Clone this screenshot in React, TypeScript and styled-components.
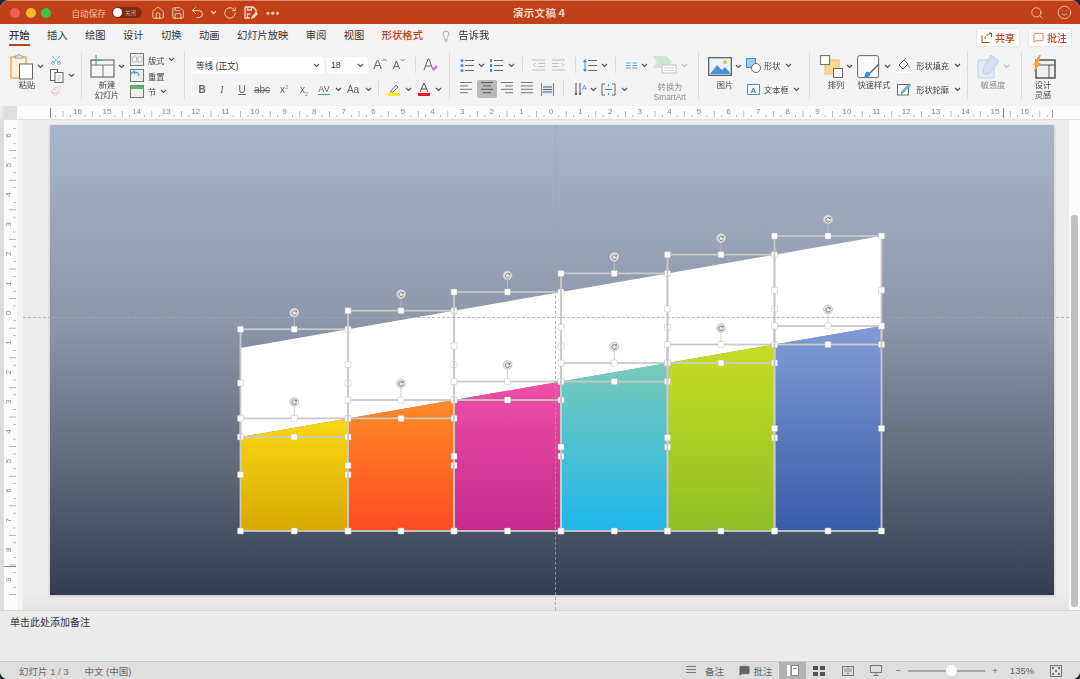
import React from 'react';
import styled, { createGlobalStyle } from 'styled-components';
import { House, Save, Undo2, RotateCw, Search, Smile, Lightbulb, MessageSquare, Scissors, Paintbrush, MessageSquareText } from 'lucide-react';

const RED = '#c0401a';
const CJK = '"Liberation Sans", "Noto Sans CJK SC", sans-serif';

const Global = createGlobalStyle`
    html, body { margin: 0; padding: 0; background: #202a38; }
    body { font-family: ${CJK}; }
    sup, sub { font-size: 5.5px; line-height: 0; color: #4a93d8; }
`;

const Window = styled.div`
    width: 1080px;
    height: 679px;
    display: flex;
    flex-direction: column;
    overflow: hidden;
    border-radius: 9px 9px 8px 8px;
    background: #ebebeb;
    filter: blur(0.3px);
`;

/* title bar */
const TitleBar = styled.div`
    height: 24px;
    flex: none;
    box-sizing: border-box;
    display: grid;
    grid-template-columns: 1fr auto 1fr;
    align-items: center;
    background: ${RED};
    border-top: 1px solid #dd8a6c;
    color: #f7d9cc;
`;

const TitleLeft = styled.div`
    display: flex;
    align-items: center;
    padding-left: 10px;
`;

const TitleRight = styled.div`
    display: flex;
    align-items: center;
    justify-content: flex-end;
    padding-right: 6px;
`;

const Light = styled.span<{ $c: string }>`
    width: 10px;
    height: 10px;
    margin-right: 5.5px;
    border-radius: 50%;
    background: ${(p) => p.$c};
`;

const AutoSave = styled.span`
    margin-left: 15px;
    font-size: 8.6px;
    color: #f0c0ac;
`;

const Toggle = styled.div`
    width: 30px;
    height: 11px;
    margin: 0 6px;
    display: flex;
    align-items: center;
    border-radius: 6px;
    background: #7d2c12;
    font-size: 5.5px;
    color: #d9a997;
`;

const Knob = styled.span`
    width: 9px;
    height: 9px;
    margin: 0 3px 0 1px;
    border-radius: 50%;
    background: #fff;
`;

const MoreDots = styled.span`
    font-size: 7px;
    letter-spacing: 0.6px;
    color: #f7d9cc;
`;

const DocName = styled.div`
    font-size: 10.5px;
    font-weight: 700;
    letter-spacing: 0.3px;
    color: #f6d5c7;
`;

const Cell = styled.div<{ $w: number; $on?: boolean }>`
    width: ${(p) => p.$w}px;
    height: 18px;
    flex: none;
    display: flex;
    align-items: center;
    justify-content: center;
    border-radius: 2px;
    font-size: 10px;
    color: #666;
    background: ${(p) => (p.$on ? '#b9b9b9' : 'transparent')};
`;

/* tabs */
const TabRow = styled.div`
    height: 26px;
    flex: none;
    display: flex;
    align-items: flex-start;
    gap: 17.4px;
    padding: 0 8px 0 9px;
    background: #f3f3f3;
`;

const Tab = styled.div<{ $active?: boolean; $accent?: boolean }>`
    height: 22px;
    box-sizing: border-box;
    padding-top: 4px;
    display: flex;
    align-items: center;
    gap: 6px;
    font-size: 10.3px;
    line-height: 16px;
    color: ${(p) => (p.$accent ? RED : '#333')};
    font-weight: ${(p) => (p.$active || p.$accent ? 500 : 400)};
    border-bottom: 2px solid ${(p) => (p.$active ? RED : 'transparent')};
`;

const TabButtons = styled.div`
    margin-left: auto;
    padding-top: 4px;
    display: flex;
    gap: 8px;
`;

const TabButton = styled.div`
    width: 44px;
    height: 19px;
    display: flex;
    align-items: center;
    justify-content: center;
    gap: 3px;
    background: #fff;
    border: 1px solid #e6e6e6;
    box-sizing: border-box;
    border-radius: 2px;
    font-size: 10px;
    font-weight: 500;
    color: ${RED};
`;

/* ribbon */
const Ribbon = styled.div`
    height: 56px;
    flex: none;
    box-sizing: border-box;
    padding-top: 2px;
    display: flex;
    align-items: flex-start;
    background: #f3f3f3;
`;

const Group = styled.div<{ $w: number; $pad?: number; $last?: boolean }>`
    width: ${(p) => p.$w}px;
    height: 47px;
    flex: none;
    box-sizing: border-box;
    padding-left: ${(p) => p.$pad ?? 0}px;
    display: flex;
    border-right: ${(p) => (p.$last ? 'none' : '1px solid #dcdcdc')};
`;

const BigTool = styled.div<{ $w: number }>`
    width: ${(p) => p.$w}px;
    flex: none;
    display: flex;
    flex-direction: column;
    align-items: center;
`;

const BigIcon = styled.div`
    height: 29px;
    flex: none;
    display: flex;
    align-items: center;
    justify-content: center;
    gap: 3px;
`;

const ToolLabel = styled.div<{ $off?: boolean }>`
    flex: none;
    font-size: 8.2px;
    line-height: 9.8px;
    text-align: center;
    white-space: nowrap;
    color: ${(p) => (p.$off ? '#8f8f8f' : '#444')};
`;

const ThreeStack = styled.div<{ $ml: number }>`
    margin-left: ${(p) => p.$ml}px;
    display: flex;
    flex-direction: column;
`;

const StackRow = styled.div`
    height: 17px;
    display: flex;
    align-items: center;
    gap: 4px;
    font-size: 8.2px;
    color: #444;
`;

const TwoRows = styled.div`
    padding-top: 4px;
    display: flex;
    flex-direction: column;
    gap: 6px;
`;

const ToolRow = styled.div`
    height: 18px;
    display: flex;
    align-items: center;
    font-size: 8.2px;
    color: #444;
    white-space: nowrap;
`;

const FontSelect = styled.div<{ $w: number }>`
    width: ${(p) => p.$w}px;
    height: 17px;
    margin-right: 3px;
    flex: none;
    box-sizing: border-box;
    padding: 0 4px;
    display: flex;
    align-items: center;
    justify-content: space-between;
    background: #fff;
    border-radius: 3px;
    font-size: 8.6px;
    color: #333;
`;

const ToolSep = styled.span`
    width: 1px;
    height: 16px;
    background: #dcdcdc;
`;

const SmartArtLabel = styled(ToolLabel)`
    width: 56px;
    margin-top: 8px;
`;

/* ruler */
const RulerRow = styled.div`
    height: 14px;
    flex: none;
    display: flex;
    background: #fbfbfb;
    border-bottom: 1px solid #e2e2e2;
    box-sizing: border-box;
`;

const RulerCorner = styled.div`
    width: 17px;
    flex: none;
    background: #dfdfdf;
    border-left: 3px solid #e9e9e9;
    box-sizing: border-box;
`;

const RulerText = styled.text`
    font-family: "Liberation Sans", sans-serif;
    font-size: 8px;
    fill: #888;
`;

/* workspace */
const Workspace = styled.div`
    height: 490px;
    flex: none;
    display: flex;
`;

const SideRuler = styled.div`
    width: 17px;
    flex: none;
    box-sizing: border-box;
    background: #fbfbfb;
    border-left: 4px solid #dcdcdc;
`;

const Canvas = styled.div`
    flex: 1;
    position: relative;
    box-sizing: border-box;
    padding: 5px 0 0 27px;
    border-left: 6px solid #f3f3f3;
    background: linear-gradient(#ececec 0, #ececec 475px, #e3e3e3 490px);
`;

const Slide = styled.div`
    width: 1004px;
    height: 470px;
    box-shadow: 0 1px 3px rgba(0, 0, 0, 0.2);
    background: linear-gradient(#a9b5c8 0%, #8c97a9 42%, #5f6a7b 72%, #323d4f 100%);
`;

const HGuide = styled.div`
    position: absolute;
    left: 0;
    right: 0;
    top: 197px;
    border-top: 1px dashed rgba(170, 170, 170, 0.8);
`;

const VGuide = styled.div`
    position: absolute;
    left: 532px;
    top: 5px;
    bottom: 0;
    border-left: 1px dashed rgba(160, 160, 160, 0.8);
`;

const ScrollTrack = styled.div`
    width: 11px;
    flex: none;
    box-sizing: border-box;
    padding: 95px 2px 3px;
    background: #fafafa;
`;

const ScrollThumb = styled.div`
    height: 100%;
    border-radius: 3px;
    background: #c1c1c1;
`;

/* notes + status */
const Notes = styled.div`
    height: 51px;
    flex: none;
    box-sizing: border-box;
    padding: 5px 10px;
    background: #ebebeb;
    border-top: 1px solid #d5d5d5;
    font-size: 10px;
    line-height: 14px;
    color: #333;
`;

const StatusBar = styled.div`
    height: 18px;
    flex: none;
    box-sizing: border-box;
    display: flex;
    align-items: center;
    padding-left: 19px;
    background: #dedede;
    border-top: 1px solid #c9c9c9;
    font-size: 9.5px;
    color: #666;
`;

const StatusRight = styled.div`
    margin-left: auto;
    padding-right: 7px;
    height: 100%;
    display: flex;
    align-items: center;
`;

const StatusItem = styled.div<{ $w: number; $on?: boolean; $gap?: number }>`
    width: ${(p) => p.$w}px;
    height: 100%;
    flex: none;
    display: flex;
    align-items: center;
    justify-content: center;
    gap: ${(p) => p.$gap ?? 3}px;
    background: ${(p) => (p.$on ? '#b2b2b2' : 'transparent')};
`;

const ZoomTrack = styled.div`
    width: 77px;
    height: 2px;
    flex: none;
    display: flex;
    align-items: center;
    background: #a5a5a5;
`;

const ZoomKnob = styled.span`
    width: 11px;
    height: 11px;
    margin-left: 38px;
    border-radius: 50%;
    background: #fff;
`;

const Caret = ({ c = '#555' }: { c?: string }) => (
    <svg width="7" height="5" viewBox="0 0 7 5" style={{ flex: 'none' }}>
        <path d="M1 1l2.5 2.5L6 1" fill="none" stroke={c} strokeWidth="1.2" />
    </svg>
);

const Lines = ({ w = 12, n = 4, gap = 3.4, inset = [] as number[], pad = [] as number[], c = '#777' }) => (
    <svg width={w} height={n * gap + 2} viewBox={`0 0 ${w} ${n * gap + 2}`} style={{ display: 'block' }}>
        {Array.from({ length: n }, (_, i) => (
            <rect key={i} x={pad[i] ?? 0} y={1 + i * gap} width={w - (inset[i] ?? 0) - (pad[i] ?? 0)} height="1" fill={c} />
        ))}
    </svg>
);

const SaveAsIcon = () => (
    <svg width="14" height="14" viewBox="0 0 14 14">
        <path d="M1 1h8l3 3v3M1 1v11h5M3.500 1v3h4V1M3.500 12V8h3" fill="none" stroke="#f7d9cc" strokeWidth="1.300" />
        <path d="M7 13l1-3 4-4 2 2-4 4z" fill="#f7d9cc" />
    </svg>
);

const PasteIcon = () => (
    <svg width="24" height="27" viewBox="0 0 24 27">
        <rect x="1" y="4" width="15" height="21" fill="#fdeed8" stroke="#eba44d" strokeWidth="1.3" />
        <path d="M5 5V3h2.5a1.5 1.5 0 013 0H13v2z" fill="#eee" stroke="#888" strokeWidth=".8" />
        <rect x="9.5" y="11" width="13" height="15" fill="#fff" stroke="#666" strokeWidth="1" />
    </svg>
);

const CopyIcon = () => (
    <svg width="14" height="14" viewBox="0 0 14 14">
        <rect x=".5" y=".5" width="7" height="11" fill="#fff" stroke="#666" />
        <rect x="5" y="3.5" width="8" height="10" fill="#fff" stroke="#666" />
        <path d="M7 7h4M7 9h4M7 11h3" stroke="#aaa" strokeWidth=".7" />
    </svg>
);

const NewSlideIcon = () => (
    <svg width="26" height="23" viewBox="0 0 26 23">
        <rect x="2" y="5" width="23" height="17" fill="#f6f6f6" stroke="#777" strokeWidth="1.3" />
        <path d="M2 10h23M14 10v12" stroke="#777" />
        <path d="M7 0v11M1 5.500h12" stroke="#39b36b" strokeWidth="1.2" />
    </svg>
);

const MiniLayout = ({ kind }: { kind: 'layout' | 'reset' | 'section' }) => (
    <svg width="14" height="13" viewBox="0 0 14 13">
        <rect x=".5" y=".5" width="13" height="12" fill="#eee" stroke="#777" />
        {kind === 'layout' && <path d="M2.500 4h4v5h-4zM8 4h4v5H8z" fill="#fff" stroke="#999" strokeWidth=".6" />}
        {kind === 'reset' && <path d="M1 5l3-3 1 3M4 3c3 0 5 1 5 4" fill="none" stroke="#3d8fd9" strokeWidth="1.1" />}
        {kind === 'section' && <rect x=".5" y=".5" width="13" height="3.500" fill="#59b66f" />}
    </svg>
);

const BigA = ({ up }: { up?: boolean }) => (
    <span style={{ display: 'flex', alignItems: 'flex-start' }}>
        <span style={{ fontSize: up ? 13 : 11, lineHeight: '14px', color: '#666' }}>A</span>
        <svg width="5" height="5" viewBox="0 0 5 5">
            <path d={up ? 'M.5 3L2.500 1l2 2' : 'M.5 1l2 2 2-2'} fill="none" stroke="#3d8fd9" />
        </svg>
    </span>
);

const Eraser = () => (
    <svg width="16" height="15" viewBox="0 0 16 15">
        <path d="M1 12L5 1h1l4 11M3 8h5" fill="none" stroke="#666" />
        <path d="M9 11l4-4 2 2-4 4z" fill="#d27fd0" />
    </svg>
);

const ColorA = ({ c, pen }: { c: string; pen?: boolean }) => (
    <svg width="14" height="14" viewBox="0 0 14 14">
        {pen ? <path d="M4 9l5-6 2 2-5 5H3z" fill="#eee" stroke="#777" /> : <path d="M3 10L7 1l4 9M4.500 7h5" fill="none" stroke="#555" />}
        <rect x="1" y="11" width="12" height="3" fill={c} />
    </svg>
);

const Bullets = ({ num }: { num?: boolean }) => (
    <svg width="14" height="13" viewBox="0 0 14 13">
        {[1.5, 6.5, 11.5].map((y) => (
            <g key={y}>
                {num ? <rect x="1" y={y - 1.5} width="2" height="3" fill="#3d8fd9" /> : <circle cx="2" cy={y} r="1.5" fill="#3d8fd9" />}
                <rect x="5" y={y - 0.5} width="9" height="1" fill="#666" />
            </g>
        ))}
    </svg>
);

const Indent = ({ flip }: { flip?: boolean }) => (
    <svg width="13" height="12" viewBox="0 0 13 12" style={{ transform: flip ? 'scaleX(-1)' : undefined }}>
        <path d="M0 1h13M6 4.500h7M6 7.500h7M0 11h13" stroke="#c3c3c3" />
        <path d="M4 4L1 6l3 2" fill="none" stroke="#b7d0e6" />
    </svg>
);

const LineSpace = () => (
    <svg width="14" height="13" viewBox="0 0 14 13">
        <path d="M5 1.500h9M5 6.500h9M5 11.500h9" stroke="#666" />
        <path d="M2 0L0 3h4zM2 13l-2-3h4z" fill="#3d8fd9" />
        <path d="M2 3v7" stroke="#3d8fd9" />
    </svg>
);

const Columns = () => (
    <svg width="11" height="7" viewBox="0 0 11 7">
        <path d="M0 1h4.500M6.500 1h4.500M0 3.500h4.500M6.500 3.500h4.500M0 6h4.500M6.500 6h4.500" stroke="#5a9fde" strokeWidth="1" />
    </svg>
);

const SmartArtIcon = () => (
    <svg width="24" height="18" viewBox="0 0 24 18">
        <path d="M0 0h14l5 6-5 6H0l4-6z" fill="#cfe6d4" />
        <rect x="9" y="9" width="14" height="8" fill="#fff" stroke="#c3c3c3" />
        <path d="M11 12h10M11 14.500h10" stroke="#cfcfcf" />
    </svg>
);

const Dist = () => (
    <svg width="13" height="13" viewBox="0 0 13 13">
        <path d="M.5 0v13M12.500 0v13" stroke="#4a93d8" />
        <rect x="1" y="1.500" width="11" height="10" fill="#d7e8f6" />
        <path d="M2 4h9M2 6.500h9M2 9h9" stroke="#666" />
    </svg>
);

const TextDir = () => (
    <svg width="13" height="15" viewBox="0 0 13 15">
        <path d="M2 1v12M6 1v12M1 11l1 2 1-2M5 11l1 2 1-2" fill="none" stroke="#555" />
        <text x="8" y="8" fontSize="7" fill="#3d8fd9" fontFamily="Liberation Sans">A</text>
    </svg>
);

const AlignText = () => (
    <svg width="15" height="13" viewBox="0 0 15 13">
        <path d="M4 1H1v11h3M11 1h3v11h-3" fill="none" stroke="#666" />
        <path d="M4 6.500h7M7.500 1v2M7.500 10v2" stroke="#3d8fd9" />
    </svg>
);

const PictureIcon = () => (
    <svg width="24" height="19" viewBox="0 0 24 19">
        <rect x=".7" y=".7" width="22.600" height="17.600" fill="#e9f3fb" stroke="#555" strokeWidth="1.2" />
        <path d="M2 17l7-9 5 5 3-3 6 7z" fill="#4a93d8" />
        <circle cx="17" cy="5" r="2" fill="#f3b55a" />
    </svg>
);

const ShapesIcon = () => (
    <svg width="15" height="15" viewBox="0 0 15 15">
        <rect x=".5" y=".5" width="9" height="9" fill="#a8cbec" stroke="#3d8fd9" />
        <circle cx="10" cy="10" r="4.500" fill="#fff" stroke="#666" />
    </svg>
);

const TextBoxIcon = () => (
    <svg width="15" height="13" viewBox="0 0 15 13">
        <rect x="1.500" y="1.500" width="12" height="10" fill="#fff" stroke="#4a93d8" />
        <text x="4.500" y="9.500" fontSize="8" fontWeight="700" fill="#3d8fd9" fontFamily="Liberation Sans">A</text>
    </svg>
);

const ArrangeIcon = () => (
    <svg width="23" height="23" viewBox="0 0 23 23">
        <rect x="5" y="5" width="14" height="14" fill="#fbd98f" stroke="#efbd62" />
        <rect x=".6" y=".6" width="9" height="9" fill="#fff" stroke="#666" />
        <rect x="13.500" y="13.500" width="9" height="9" fill="#fff" stroke="#666" />
    </svg>
);

const QuickStyleIcon = () => (
    <svg width="24" height="24" viewBox="0 0 24 24">
        <rect x=".6" y=".6" width="21" height="22" rx="2" fill="#fafafa" stroke="#666" />
        <path d="M22 9L13 18" stroke="#666" strokeWidth="1.500" />
        <path d="M9 17c3-1 5 1 4 3-1 3-5 3-7 3 2-1 2-4 3-6z" fill="#3d8fd9" />
    </svg>
);

const FillIcon = () => (
    <svg width="14" height="15" viewBox="0 0 14 15">
        <path d="M2 7l5-5 4 4-5 5z" fill="#fff" stroke="#555" />
        <path d="M7 2L9 0M11 7c1 1 2 2 1 3" fill="none" stroke="#3d8fd9" />
        <rect x="0" y="12" width="13" height="3" fill="#fff" />
    </svg>
);

const OutlineIcon = () => (
    <svg width="14" height="13" viewBox="0 0 14 13">
        <rect x=".5" y="1.500" width="11" height="10.500" fill="#fff" stroke="#666" />
        <path d="M4 9l8-8 2 1-8 8-2 .5z" fill="#7fb5e2" stroke="#3d8fd9" strokeWidth=".6" />
    </svg>
);

const SensitivityIcon = () => (
    <svg width="23" height="25" viewBox="0 0 23 25">
        <path d="M1 6h16v18H1z" fill="#e3ecf4" stroke="#bcd2e6" />
        <path d="M14 1l8 6-9 12-6 1-1-5z" fill="#d5e2ee" stroke="#bcd2e6" />
    </svg>
);

const DesignIcon = () => (
    <svg width="25" height="24" viewBox="0 0 25 24">
        <rect x="5" y="5" width="19" height="18" fill="#efefef" stroke="#555" strokeWidth="1.500" />
        <path d="M5 10h19M18 10v13" stroke="#555" />
        <path d="M8 0L2 10h3l-3 8 8-10H7l3-8z" fill="#f4a63c" />
    </svg>
);

const FitIcon = () => (
    <svg width="12" height="12" viewBox="0 0 12 12">
        <rect x=".5" y=".5" width="11" height="11" fill="none" stroke="#777" />
        <path d="M2 2h2v2H2zM8 2h2v2H8zM2 8h2v2H2zM8 8h2v2H8zM5 5h2v2H5z" fill="#777" />
    </svg>
);

const ShareIcon = () => (
    <svg width="11" height="11" viewBox="0 0 11 11">
        <path d="M8 1h2.500v4M1 3.500v7h7.500M4 7c0-3 2-4.500 6-5.500" fill="none" stroke={RED} strokeWidth="1" />
    </svg>
);

/* ruler drawings */
const UNIT = 29.6;

const TopRuler = () => {
    const ticks: React.ReactElement[] = [];
    for (let i = -70; i <= 70; i++) {
        const x = 551 + i * (UNIT / 4);
        if (x < 50 || x > 1052) continue;
        if (i % 4 === 0) {
            ticks.push(
                <RulerText key={i} x={x} y={114} textAnchor="middle">{Math.abs(i / 4)}</RulerText>,
            );
        } else {
            const long = i % 2 === 0;
            ticks.push(<rect key={i} x={x} y={long ? 111 : 115} width="0.8" height={long ? 6 : 2} fill="#aaa" />);
        }
    }
    return (
        <svg width="1063" height="13" viewBox="17 106 1063 13">
            {ticks}
            <rect x="50" y="108" width="1" height="10" fill="#888" />
            <rect x="1003" y="108" width="1" height="10" fill="#888" />
            <rect x="1052" y="110" width="1" height="8" fill="#aaa" />
        </svg>
    );
};

const LeftRuler = () => {
    const ticks: React.ReactElement[] = [];
    for (let i = -26; i <= 40; i++) {
        const y = 313 + i * (UNIT / 4);
        if (y < 124 || y > 600) continue;
        if (i % 4 === 0) {
            const n = Math.abs(i / 4);
            ticks.push(
                <RulerText key={i} x={8} y={y + 3} textAnchor="middle" transform={`rotate(-90 8 ${y})`}>{n}</RulerText>,
            );
        } else {
            const long = i % 2 === 0;
            ticks.push(<rect key={i} x={long ? 9 : 13} y={y} width={long ? 7 : 3} height="0.8" fill="#aaa" />);
        }
    }
    return (
        <svg width="13" height="490" viewBox="4 120 13 490" style={{ display: 'block' }}>
            {ticks}
            <rect x="4" y="566" width="12" height="1" fill="#888" />
        </svg>
    );
};

/* the six bars on the slide */
const XS = [240.5, 348, 454, 561, 667.5, 774.5, 881.5];
const BOTTOM = 531;
const topLine = (x: number) => 348 - (112 * (x - 240.5)) / 641;
const midLine = (x: number) => 437 - (111 * (x - 240.5)) / 641;
const FILLS = [
    ['#f9d916', '#d7a800'],
    ['#ff8c27', '#ff4a22'],
    ['#ee4fa7', '#c52b8b'],
    ['#79cbb9', '#1fb6ea'],
    ['#c6dd22', '#90be27'],
    ['#829bd5', '#385ca9'],
];

const Selection = ({ l, r, t, b }: { l: number; r: number; t: number; b: number }) => {
    const cx = (l + r) / 2;
    const cy = (t + b) / 2;
    const points = [
        [l, t], [cx, t], [r, t],
        [l, cy], [r, cy],
        [l, b], [cx, b], [r, b],
    ];
    return (
        <g>
            <rect x={l} y={t} width={r - l} height={b - t} fill="none" stroke="#c9c9c9" strokeWidth="1.8" />
            <path d={`M${cx} ${t}v-12`} stroke="#c4c4c4" strokeWidth="0.8" />
            <circle cx={cx} cy={t - 16.5} r="4.4" fill="#e4e4e4" stroke="#c8c8c8" />
            <path
                d={`M${cx + 2} ${t - 17.500}a2.300 2.300 0 1 0 .3 2`}
                fill="none"
                stroke="#666"
                strokeWidth="0.8"
            />
            <path d={`M${cx + 2.6} ${t - 19}v2h-2z`} fill="#666" />
            {points.map(([x, y], i) => (
                <rect key={i} x={x - 3} y={y - 3} width="6" height="6" rx="0.8" fill="#fff" stroke="#bdbdbd" strokeWidth="0.5" />
            ))}
        </g>
    );
};

const SlideArt = () => (
    <svg width="1004" height="470" viewBox="50 125 1004 470" style={{ display: 'block' }}>
        <defs>
            {FILLS.map(([a, b], i) => (
                <linearGradient key={i} id={`bar${i}`} x1="0" y1="0" x2="0" y2="1">
                    <stop offset="0" stopColor={a} />
                    <stop offset="1" stopColor={b} />
                </linearGradient>
            ))}
        </defs>
        {FILLS.map((_, i) => {
            const l = XS[i];
            const r = XS[i + 1];
            return (
                <g key={i}>
                    <polygon points={`${l},${topLine(l)} ${r},${topLine(r)} ${r},${midLine(r)} ${l},${midLine(l)}`} fill="#fff" />
                    <polygon points={`${l},${midLine(l)} ${r},${midLine(r)} ${r},${BOTTOM} ${l},${BOTTOM}`} fill={`url(#bar${i})`} />
                </g>
            );
        })}
        {FILLS.map((_, i) => (
            <Selection key={i} l={XS[i]} r={XS[i + 1]} t={topLine(XS[i + 1])} b={midLine(XS[i])} />
        ))}
        {FILLS.map((_, i) => (
            <Selection key={i} l={XS[i]} r={XS[i + 1]} t={midLine(XS[i + 1])} b={BOTTOM} />
        ))}
    </svg>
);

const TABS = ['插入', '绘图', '设计', '切换', '动画', '幻灯片放映', '审阅', '视图'];

export default function App() {
    return (
        <Window>
            <Global />
            <TitleBar>
                <TitleLeft>
                    <Light $c="#ee5f57" />
                    <Light $c="#f5b82e" />
                    <Light $c="#3dc23f" />
                    <AutoSave>自动保存</AutoSave>
                    <Toggle><Knob />关闭</Toggle>
                    <Cell $w={20}><House size={14} color="#f7d9cc" strokeWidth={1.5} /></Cell>
                    <Cell $w={20}><Save size={14} color="#f7d9cc" strokeWidth={1.5} /></Cell>
                    <Cell $w={20}><Undo2 size={15} color="#f7d9cc" strokeWidth={1.5} /></Cell>
                    <Cell $w={12}><Caret c="#f7d9cc" /></Cell>
                    <Cell $w={20}><RotateCw size={14} color="#f7d9cc" strokeWidth={1.5} /></Cell>
                    <Cell $w={22}><SaveAsIcon /></Cell>
                    <Cell $w={22}><MoreDots>●●●</MoreDots></Cell>
                </TitleLeft>
                <DocName>演示文稿４</DocName>
                <TitleRight>
                    <Cell $w={34}><Search size={14} color="#f7d9cc" strokeWidth={1.3} /></Cell>
                    <Cell $w={20}><Smile size={15} color="#f7d9cc" strokeWidth={1.2} /></Cell>
                </TitleRight>
            </TitleBar>

            <TabRow>
                <Tab $active>开始</Tab>
                {TABS.map((t) => <Tab key={t}>{t}</Tab>)}
                <Tab $accent>形状格式</Tab>
                <Tab><Lightbulb size={12} color="#777" strokeWidth={1.3} />告诉我</Tab>
                <TabButtons>
                    <TabButton><ShareIcon />共享</TabButton>
                    <TabButton><MessageSquare size={11} color={RED} strokeWidth={1.4} />批注</TabButton>
                </TabButtons>
            </TabRow>

            <Ribbon>
                <Group $w={82} $pad={11}>
                    <BigTool $w={32}>
                        <BigIcon><PasteIcon /><Caret /></BigIcon>
                        <ToolLabel>粘贴</ToolLabel>
                    </BigTool>
                    <ThreeStack $ml={7}>
                        <StackRow><Scissors size={12} color="#3d8fd9" strokeWidth={1.3} style={{ transform: 'rotate(-90deg)' }} /></StackRow>
                        <StackRow><CopyIcon /><Caret /></StackRow>
                        <StackRow><Paintbrush size={12} color="#e3b89f" strokeWidth={1.4} /></StackRow>
                    </ThreeStack>
                </Group>

                <Group $w={103} $pad={8}>
                    <BigTool $w={34}>
                        <BigIcon><NewSlideIcon /><Caret /></BigIcon>
                        <ToolLabel>新建<br />幻灯片</ToolLabel>
                    </BigTool>
                    <ThreeStack $ml={6}>
                        <StackRow><MiniLayout kind="layout" />版式<Caret /></StackRow>
                        <StackRow><MiniLayout kind="reset" />重置</StackRow>
                        <StackRow><MiniLayout kind="section" />节<Caret /></StackRow>
                    </ThreeStack>
                </Group>

                <Group $w={265} $pad={7}>
                    <TwoRows>
                        <ToolRow>
                            <FontSelect $w={132}>等线 (正文)<Caret /></FontSelect>
                            <FontSelect $w={41}>18<Caret /></FontSelect>
                            <Cell $w={18}><BigA up /></Cell>
                            <Cell $w={20}><BigA /></Cell>
                            <Cell $w={12}><ToolSep /></Cell>
                            <Cell $w={20}><Eraser /></Cell>
                        </ToolRow>
                        <ToolRow>
                            <Cell $w={20}><b>B</b></Cell>
                            <Cell $w={20}><i style={{ fontFamily: '"Liberation Serif", serif' }}>I</i></Cell>
                            <Cell $w={20}><u>U</u></Cell>
                            <Cell $w={20}><s>abc</s></Cell>
                            <Cell $w={24}><span>x<sup>2</sup></span></Cell>
                            <Cell $w={16}><span>x<sub>2</sub></span></Cell>
                            <Cell $w={24}><span style={{ fontSize: 9, borderBottom: '1px solid #4a93d8', lineHeight: '10px' }}>AV</span></Cell>
                            <Cell $w={4}><Caret /></Cell>
                            <Cell $w={26}>Aa</Cell>
                            <Cell $w={4}><Caret /></Cell>
                            <Cell $w={16}><ToolSep /></Cell>
                            <Cell $w={16}><ColorA c="#ffee00" pen /></Cell>
                            <Cell $w={12}><Caret /></Cell>
                            <Cell $w={20}><ColorA c="#f0141e" /></Cell>
                            <Cell $w={8}><Caret /></Cell>
                        </ToolRow>
                    </TwoRows>
                </Group>

                <Group $w={249} $pad={5}>
                    <TwoRows>
                        <ToolRow>
                            <Cell $w={24}><Bullets /></Cell>
                            <Cell $w={4}><Caret /></Cell>
                            <Cell $w={26}><Bullets num /></Cell>
                            <Cell $w={4}><Caret /></Cell>
                            <Cell $w={18}><ToolSep /></Cell>
                            <Cell $w={14}><Indent /></Cell>
                            <Cell $w={26}><Indent flip /></Cell>
                            <Cell $w={8}><ToolSep /></Cell>
                            <Cell $w={22}><LineSpace /></Cell>
                            <Cell $w={6}><Caret /></Cell>
                            <Cell $w={16}><ToolSep /></Cell>
                            <Cell $w={16}><Columns /></Cell>
                            <Cell $w={10}><Caret /></Cell>
                            <Cell $w={32}><SmartArtIcon /></Cell>
                            <Cell $w={6}><Caret c="#bbb" /></Cell>
                        </ToolRow>
                        <ToolRow>
                            <Cell $w={22}><Lines inset={[0, 4, 0, 4]} /></Cell>
                            <Cell $w={20} $on><Lines inset={[0, 2, 0, 2]} pad={[0, 2, 0, 2]} c="#555" /></Cell>
                            <Cell $w={20}><Lines pad={[0, 4, 0, 4]} /></Cell>
                            <Cell $w={20}><Lines /></Cell>
                            <Cell $w={20}><Dist /></Cell>
                            <Cell $w={12}><ToolSep /></Cell>
                            <Cell $w={22}><TextDir /></Cell>
                            <Cell $w={4}><Caret /></Cell>
                            <Cell $w={26}><AlignText /></Cell>
                            <Cell $w={6}><Caret /></Cell>
                            <Cell $w={15} />
                            <SmartArtLabel $off>转换为<br />SmartArt</SmartArtLabel>
                        </ToolRow>
                    </TwoRows>
                </Group>

                <Group $w={111} $pad={9}>
                    <BigTool $w={34}>
                        <BigIcon><PictureIcon /><Caret /></BigIcon>
                        <ToolLabel>图片</ToolLabel>
                    </BigTool>
                    <TwoRows>
                        <ToolRow>
                            <Cell $w={22}><ShapesIcon /></Cell>
                            形状&nbsp;&nbsp;<Caret />
                        </ToolRow>
                        <ToolRow>
                            <Cell $w={22}><TextBoxIcon /></Cell>
                            文本框&nbsp;&nbsp;<Caret />
                        </ToolRow>
                    </TwoRows>
                </Group>

                <Group $w={158} $pad={8}>
                    <BigTool $w={36}>
                        <BigIcon><ArrangeIcon /><Caret /></BigIcon>
                        <ToolLabel>排列</ToolLabel>
                    </BigTool>
                    <BigTool $w={40}>
                        <BigIcon><QuickStyleIcon /><Caret /></BigIcon>
                        <ToolLabel>快速样式</ToolLabel>
                    </BigTool>
                    <TwoRows>
                        <ToolRow>
                            <Cell $w={20}><FillIcon /></Cell>
                            &nbsp;形状填充&nbsp;&nbsp;<Caret />
                        </ToolRow>
                        <ToolRow>
                            <Cell $w={20}><OutlineIcon /></Cell>
                            &nbsp;形状轮廓&nbsp;&nbsp;<Caret />
                        </ToolRow>
                    </TwoRows>
                </Group>

                <Group $w={54}>
                    <BigTool $w={50}>
                        <BigIcon><SensitivityIcon /><Caret c="#bbb" /></BigIcon>
                        <ToolLabel $off>敏感度</ToolLabel>
                    </BigTool>
                </Group>

                <Group $w={58} $last>
                    <BigTool $w={42}>
                        <BigIcon><DesignIcon /></BigIcon>
                        <ToolLabel>设计<br />灵感</ToolLabel>
                    </BigTool>
                </Group>
            </Ribbon>

            <RulerRow>
                <RulerCorner />
                <TopRuler />
            </RulerRow>

            <Workspace>
                <SideRuler><LeftRuler /></SideRuler>
                <Canvas>
                    <Slide><SlideArt /></Slide>
                    <HGuide />
                    <VGuide />
                </Canvas>
                <ScrollTrack><ScrollThumb /></ScrollTrack>
            </Workspace>

            <Notes>单击此处添加备注</Notes>

            <StatusBar>
                幻灯片 1 / 3&nbsp;&nbsp;&nbsp;&nbsp;&nbsp;&nbsp;中文 (中国)
                <StatusRight>
                    <StatusItem $w={42} $gap={9}><Lines w={10} n={3} gap={3} c="#777" />备注</StatusItem>
                    <StatusItem $w={11} />
                    <StatusItem $w={38}><MessageSquareText size={11} color="#666" fill="#666" />批注</StatusItem>
                    <StatusItem $w={4} />
                    <StatusItem $w={27} $on>
                        <svg width="12" height="11" viewBox="0 0 12 11">
                            <rect x="0" y="0" width="3" height="11" fill="#fff" />
                            <rect x="4.500" y=".5" width="7" height="10" fill="#fff" stroke="#888" />
                            <rect x="6" y="3" width="4" height="1" fill="#888" />
                        </svg>
                    </StatusItem>
                    <StatusItem $w={26}>
                        <svg width="12" height="10" viewBox="0 0 12 10">
                            <path d="M0 0h5v4H0zM7 0h5v4H7zM0 6h5v4H0zM7 6h5v4H7z" fill="#555" />
                        </svg>
                    </StatusItem>
                    <StatusItem $w={32}>
                        <svg width="12" height="10" viewBox="0 0 12 10">
                            <rect x=".5" y=".5" width="11" height="9" fill="none" stroke="#777" />
                            <path d="M6 .5v9M2 3h3M2 5h3M7 3h3M7 5h3" stroke="#777" strokeWidth=".8" />
                        </svg>
                    </StatusItem>
                    <StatusItem $w={24}>
                        <svg width="12" height="11" viewBox="0 0 12 11">
                            <rect x=".5" y=".5" width="11" height="7" fill="none" stroke="#777" />
                            <path d="M6 8v2M3.500 10.500h5" stroke="#777" />
                        </svg>
                    </StatusItem>
                    <StatusItem $w={20}>−</StatusItem>
                    <ZoomTrack><ZoomKnob /></ZoomTrack>
                    <StatusItem $w={20}>+</StatusItem>
                    <StatusItem $w={34}>135%</StatusItem>
                    <StatusItem $w={34}><FitIcon /></StatusItem>
                </StatusRight>
            </StatusBar>
        </Window>
    );
}
